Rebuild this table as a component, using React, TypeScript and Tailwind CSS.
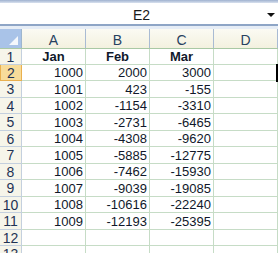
import React from "react";

const ROWS: (string | number)[][] = [
  ["Jan", "Feb", "Mar"],
  [1000, 2000, 3000],
  [1001, 423, -155],
  [1002, -1154, -3310],
  [1003, -2731, -6465],
  [1004, -4308, -9620],
  [1005, -5885, -12775],
  [1006, -7462, -15930],
  [1007, -9039, -19085],
  [1008, -10616, -22240],
  [1009, -12193, -25395],
  ["", "", ""],
  ["", "", ""],
];

// alternating heights keep rows on the 16.5px pitch of the reference
const HEIGHTS = [
  "h-[16px]", "h-[16px]", "h-[17px]", "h-[16px]", "h-[17px]", "h-[16px]", "h-[17px]",
  "h-[16px]", "h-[17px]", "h-[16px]", "h-[17px]", "h-[16px]", "h-[17px]",
];

const COLS = ["A", "B", "C", "D"];

export default function App() {
  return (
    <div className="relative h-[253px] w-[278px] overflow-hidden bg-white font-['Liberation_Sans',Arial,sans-serif] text-[13px] leading-none text-[#10182a]">
      {/* Top chrome */}
      <div className="h-[3px] bg-gradient-to-b from-[#9fb1cf] to-[#d9e2ef]" />

      {/* Name box */}
      <div className="relative flex h-[21px] items-center justify-center bg-white">
        <span className="ml-[5px] mt-[2px] text-[14px] text-[#1a1a1a]">E2</span>
        <span className="absolute right-[3px] top-[10px] h-0 w-0 border-x-[4px] border-t-[4px] border-x-transparent border-t-[#111]" />
      </div>
      <div className="h-[2px] bg-[#8ea5c6]" />
      <div className="h-[3px] bg-[#e6edf6]" />

      {/* Column headers */}
      <div className="flex h-[20px] border-b border-[#a9c8a4]">
        <div className="relative w-[22px] shrink-0 border-r border-[#9eb6ce] bg-[#a9c3e8]">
          <span className="absolute bottom-[3px] right-[3px] h-0 w-0 border-b-[9px] border-l-[9px] border-b-[#f4f7fc] border-l-transparent" />
        </div>
        {COLS.map((c) => (
          <div
            key={c}
            className="flex w-[64px] shrink-0 items-center justify-center border-r border-[#a9bbd3] bg-gradient-to-b from-[#fbfaf3] to-[#f3f1df] pt-[2px] text-[14px] text-[#27415f]"
          >
            {c}
          </div>
        ))}
      </div>

      {/* Rows */}
      {ROWS.map((row, i) => {
        const selected = i === 1;
        return (
          <div key={i} className={`flex ${HEIGHTS[i]}`}>
            <div
              className={
                selected
                  ? "flex w-[22px] shrink-0 items-center justify-center border border-t-0 border-[#e9b04f] bg-[#f8dc9a] text-[14px] text-[#1f3355]"
                  : "flex w-[22px] shrink-0 items-center justify-center border-b border-r border-[#c4d0de] bg-[#f6f5ea] text-[14px] text-[#1f3355]"
              }
            >
              {i + 1}
            </div>
            {row.map((v, j) => (
              <div
                key={j}
                className={
                  i === 0
                    ? "flex w-[64px] shrink-0 items-center justify-center border-b border-r border-[#c6dcc6] font-bold"
                    : "flex w-[64px] shrink-0 items-center justify-end border-b border-r border-[#c6dcc6] pr-[2px]"
                }
              >
                {v}
              </div>
            ))}
            <div className="w-[64px] shrink-0 border-b border-r border-[#c6dcc6]" />
          </div>
        );
      })}

      {/* Active cell E2 edge */}
      <div className="absolute left-[276px] top-[64px] h-[18px] w-[2px] bg-black" />
    </div>
  );
}
